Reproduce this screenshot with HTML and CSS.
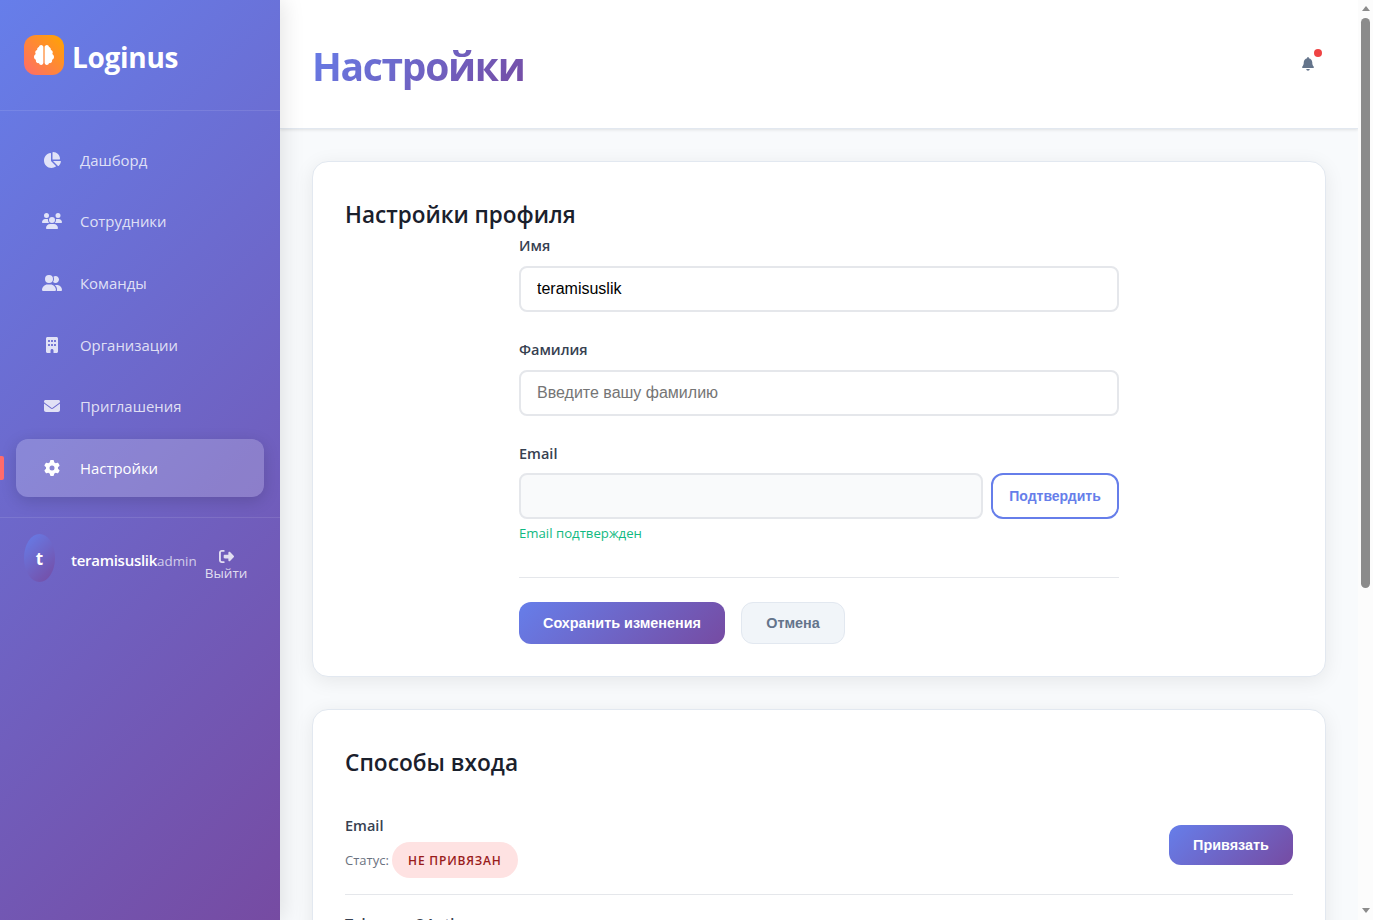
FILE: index.html
```html
<!DOCTYPE html>
<html lang="ru">
<head>
<meta charset="utf-8">
<title>Loginus — Настройки</title>
<link rel="stylesheet" href="styles.css">
</head>
<body>
<div class="app">
  <aside class="sidebar">
    <div class="brand">
      <span class="brand-mark"><svg width="20" height="20" viewBox="0 0 512 512"><path d="M184 0c30.9 0 56 25.1 56 56V456c0 30.9-25.1 56-56 56c-28.9 0-52.7-21.9-55.7-50.1c-5.2 1.4-10.7 2.1-16.3 2.1c-35.3 0-64-28.7-64-64c0-7.4 1.3-14.6 3.6-21.2C21.4 367.4 0 338.2 0 304c0-31.9 18.7-59.5 45.8-72.3C37.1 220.8 32 207 32 192c0-30.7 21.6-56.3 50.4-62.6C80.8 123.9 80 118 80 112c0-29.9 20.6-55.1 48.3-62.1C131.3 21.9 155.1 0 184 0zM328 0c28.9 0 52.6 21.9 55.7 49.9c27.8 7 48.3 32.1 48.3 62.1c0 6-.8 11.9-2.4 17.4c28.8 6.2 50.4 31.9 50.4 62.6c0 15-5.1 28.8-13.8 39.7C493.3 244.5 512 272.1 512 304c0 34.2-21.4 63.4-51.6 74.8c2.3 6.6 3.6 13.8 3.6 21.2c0 35.3-28.7 64-64 64c-5.6 0-11.1-.7-16.3-2.1c-3 28.2-26.8 50.1-55.7 50.1c-30.9 0-56-25.1-56-56V56c0-30.9 25.1-56 56-56z"/></svg></span>
      <span class="brand-name">Loginus</span>
    </div>
    <nav class="nav">
      <a class="nav-item"><svg width="18" height="16" viewBox="0 0 576 512"><path d="M304 240V16.6c0-9 7-16.6 16-16.6C443.7 0 544 100.3 544 224c0 9-7.6 16-16.6 16H304zM32 272C32 150.7 122.1 50.3 239 34.3c9.2-1.3 17 6.1 17 15.4V288L412.5 444.5c6.7 6.7 6.2 17.7-1.5 23.1C371.8 495.6 323.8 512 272 512C139.5 512 32 404.6 32 272zm526.4 16c9.3 0 16.6 7.8 15.4 17c-7.7 55.9-34.6 105.6-73.9 142.3c-6 5.6-15.4 5.2-21.2-.7L320 288H558.4z"/></svg><span>Дашборд</span></a>
      <a class="nav-item"><svg width="20" height="16" viewBox="0 0 640 512"><path d="M144 0a80 80 0 1 1 0 160A80 80 0 1 1 144 0zM512 0a80 80 0 1 1 0 160A80 80 0 1 1 512 0zM0 298.7C0 239.8 47.8 192 106.7 192h42.7c15.9 0 31 3.5 44.6 9.7c-1.3 7.2-1.9 14.7-1.9 22.3c0 38.2 16.8 72.5 43.3 96c-.2 0-.4 0-.7 0H21.3C9.6 320 0 310.4 0 298.7zM405.3 320c-.2 0-.4 0-.7 0c26.6-23.5 43.3-57.8 43.3-96c0-7.6-.7-15-1.9-22.3c13.6-6.3 28.7-9.7 44.6-9.7h42.7C592.2 192 640 239.8 640 298.7c0 11.8-9.6 21.3-21.3 21.3H405.3zM224 224a96 96 0 1 1 192 0 96 96 0 1 1 -192 0zM128 485.3C128 411.7 187.7 352 261.3 352H378.7C452.3 352 512 411.7 512 485.3c0 14.7-11.9 26.7-26.7 26.7H154.7c-14.7 0-26.7-11.9-26.7-26.7z"/></svg><span>Сотрудники</span></a>
      <a class="nav-item"><svg width="20" height="16" viewBox="0 0 640 512"><path d="M96 128a128 128 0 1 1 256 0A128 128 0 1 1 96 128zM0 482.3C0 383.8 79.8 304 178.3 304h91.4C368.2 304 448 383.8 448 482.3c0 16.4-13.3 29.7-29.7 29.7H29.7C13.3 512 0 498.7 0 482.3zM609.3 512H471.4c5.4-9.4 8.6-20.3 8.6-32v-8c0-60.7-27.1-115.2-69.8-151.8c2.4-.1 4.7-.2 7.1-.2h61.4C567.8 320 640 392.2 640 481.3c0 17-13.8 30.7-30.7 30.7zM432 256c-31 0-59-12.6-79.3-32.9C372.4 196.5 384 163.6 384 128c0-26.8-6.6-52.1-18.3-74.3C384.3 40.1 407.2 32 432 32c61.9 0 112 50.1 112 112s-50.1 112-112 112z"/></svg><span>Команды</span></a>
      <a class="nav-item"><svg width="12" height="16" viewBox="0 0 384 512"><path fill-rule="evenodd" d="M48 0C21.5 0 0 21.5 0 48V464c0 26.5 21.5 48 48 48h96V432c0-26.5 21.5-48 48-48s48 21.5 48 48v80h96c26.5 0 48-21.5 48-48V48c0-26.5-21.5-48-48-48H48zM64 240c0-8.800 7.200-16 16-16h32c8.800 0 16 7.200 16 16v32c0 8.800-7.200 16-16 16H80c-8.800 0-16-7.200-16-16V240zM160 240c0-8.800 7.200-16 16-16h32c8.800 0 16 7.200 16 16v32c0 8.800-7.200 16-16 16H176c-8.800 0-16-7.200-16-16V240zM256 240c0-8.800 7.200-16 16-16h32c8.800 0 16 7.200 16 16v32c0 8.800-7.200 16-16 16H272c-8.800 0-16-7.200-16-16V240zM64 112c0-8.800 7.200-16 16-16h32c8.800 0 16 7.200 16 16v32c0 8.800-7.200 16-16 16H80c-8.800 0-16-7.200-16-16V112zM160 112c0-8.800 7.200-16 16-16h32c8.800 0 16 7.200 16 16v32c0 8.800-7.200 16-16 16H176c-8.800 0-16-7.200-16-16V112zM256 112c0-8.800 7.200-16 16-16h32c8.800 0 16 7.200 16 16v32c0 8.800-7.200 16-16 16H272c-8.800 0-16-7.200-16-16V112z"/></svg><span>Организации</span></a>
      <a class="nav-item"><svg width="16" height="16" viewBox="0 0 512 512"><path d="M48 64C21.5 64 0 85.5 0 112c0 15.1 7.1 29.3 19.2 38.4L236.8 313.6c11.4 8.5 27 8.5 38.4 0L492.8 150.4c12.1-9.1 19.2-23.3 19.2-38.4c0-26.5-21.5-48-48-48H48zM0 176V384c0 35.3 28.7 64 64 64H448c35.3 0 64-28.7 64-64V176L294.4 339.2c-22.8 17.1-54 17.1-76.8 0L0 176z"/></svg><span>Приглашения</span></a>
      <a class="nav-item active"><svg width="16" height="16" viewBox="0 0 512 512"><path d="M495.9 166.6c3.2 8.7 .5 18.4-6.4 24.6l-43.3 39.4c1.1 8.3 1.7 16.8 1.7 25.4s-.6 17.1-1.7 25.4l43.3 39.4c6.9 6.2 9.6 15.9 6.4 24.6c-4.4 11.9-9.7 23.3-15.8 34.3l-4.7 8.1c-6.6 11-14 21.4-22.1 31.2c-5.9 7.2-15.7 9.6-24.5 6.8l-55.7-17.7c-13.4 10.3-28.2 18.9-44 25.4l-12.5 57.1c-2 9.1-9 16.3-18.2 17.8c-13.8 2.3-28 3.5-42.500 3.500s-28.7-1.2-42.5-3.5c-9.2-1.500-16.2-8.7-18.2-17.8l-12.5-57.1c-15.8-6.5-30.6-15.1-44-25.4L83.1 425.9c-8.8 2.8-18.6 .3-24.5-6.8c-8.1-9.8-15.5-20.2-22.1-31.2l-4.7-8.1c-6.1-11-11.4-22.4-15.8-34.3c-3.2-8.7-.5-18.4 6.4-24.6l43.3-39.4C64.6 273.1 64 264.6 64 256s.6-17.1 1.7-25.4L22.4 191.2c-6.9-6.2-9.6-15.9-6.4-24.6c4.4-11.9 9.7-23.3 15.8-34.3l4.7-8.1c6.6-11 14-21.4 22.1-31.2c5.9-7.2 15.7-9.6 24.5-6.8l55.7 17.7c13.4-10.3 28.2-18.9 44-25.4l12.5-57.1c2-9.1 9-16.3 18.2-17.8C227.3 1.2 241.5 0 256 0s28.7 1.2 42.5 3.5c9.2 1.5 16.2 8.7 18.2 17.8l12.5 57.1c15.8 6.5 30.6 15.1 44 25.4l55.7-17.7c8.8-2.8 18.6-.3 24.5 6.8c8.1 9.8 15.5 20.2 22.1 31.2l4.7 8.1c6.1 11 11.4 22.4 15.8 34.3zM256 336a80 80 0 1 0 0-160 80 80 0 1 0 0 160z"/></svg><span>Настройки</span></a>
    </nav>
    <div class="user">
      <span class="avatar">t</span>
      <span class="user-name">teramisuslik</span><span class="user-role">admin</span>
      <button class="logout"><svg width="15" height="15" viewBox="0 0 512 512"><path d="M377.9 105.9L500.7 228.7c7.2 7.2 11.3 17.1 11.3 27.3s-4.1 20.1-11.3 27.3L377.9 406.1c-6.4 6.4-15 9.9-24 9.9c-18.7 0-33.9-15.2-33.9-33.9l0-62.1-128 0c-17.7 0-32-14.3-32-32l0-64c0-17.7 14.3-32 32-32l128 0 0-62.1c0-18.7 15.2-33.9 33.9-33.9c9 0 17.6 3.6 24 9.9zM160 96L96 96c-17.7 0-32 14.3-32 32l0 256c0 17.7 14.3 32 32 32l64 0c17.7 0 32 14.3 32 32s-14.3 32-32 32l-64 0c-53 0-96-43-96-96L0 128C0 75 43 32 96 32l64 0c17.7 0 32 14.3 32 32s-14.3 32-32 32z"/></svg><span>Выйти</span></button>
    </div>
  </aside>

  <main class="main">
    <header class="topbar">
      <h1 class="page-title">Настройки</h1>
      <div class="bell"><svg width="12" height="13.700" viewBox="0 0 448 512"><path d="M224 0c-17.7 0-32 14.3-32 32V51.2C119 66 64 130.6 64 208v18.8c0 47-17.3 92.4-48.5 127.6l-7.4 8.3c-8.4 9.4-10.4 22.9-5.3 34.4S19.4 416 32 416H416c12.6 0 24-7.4 29.2-18.9s3.1-25-5.3-34.4l-7.4-8.3C401.3 319.2 384 273.9 384 226.8V208c0-77.4-55-142-128-156.8V32c0-17.7-14.3-32-32-32zm45.3 493.3c12-12 18.7-28.3 18.7-45.3H224 160c0 17 6.7 33.3 18.7 45.3s28.3 18.7 45.3 18.7s33.3-6.7 45.3-18.7z"/></svg><i class="bell-dot"></i></div>
    </header>
    <div class="content">
      <section class="card">
        <h2 class="card-title profile-title">Настройки профиля</h2>
        <form class="form">
          <label class="label">Имя</label>
          <input class="input" type="text" value="teramisuslik">
          <label class="label">Фамилия</label>
          <input class="input" type="text" placeholder="Введите вашу фамилию">
          <label class="label label-email">Email</label>
          <div class="email-row">
            <input class="input" type="text" disabled>
            <button class="btn btn-outline" type="button">Подтвердить</button>
          </div>
          <div class="hint">Email подтвержден</div>
          <div class="actions">
            <button class="btn btn-primary" type="button">Сохранить изменения</button>
            <button class="btn btn-secondary" type="button">Отмена</button>
          </div>
        </form>
      </section>
      <section class="card">
        <h2 class="card-title login-title">Способы входа</h2>
        <div class="method">
          <div>
            <div class="method-name">Email</div>
            <div class="method-status"><span class="status-label">Статус:</span><span class="badge">НЕ ПРИВЯЗАН</span></div>
          </div>
          <button class="btn btn-primary btn-link" type="button">Привязать</button>
        </div>
        <div class="method method-next">
          <div class="method-name">Telegram OAuth</div>
        </div>
      </section>
    </div>
  </main>
  <div class="scrollbar"><i class="arrow-up"></i><i class="thumb"></i><i class="arrow-down"></i></div>
</div>
</body>
</html>
```
FILE: styles.css
```css
* { box-sizing: border-box; }
body { margin: 0; font-family: "Open Sans", "Noto Sans", sans-serif; color: #1a202c; }
svg { fill: currentColor; display: block; }
.app { display: flex; width: 1373px; height: 920px; overflow: hidden; background: #f8fafc; }

.sidebar { position: relative; z-index: 2; width: 280px; flex: none; height: 920px; color: #fff; background: linear-gradient(135deg, #667eea 0%, #764ba2 100%); box-shadow: 4px 0 20px rgba(0, 0, 0, .1); }
.brand { display: flex; align-items: center; gap: 8px; height: 111px; padding: 0 24px; border-bottom: 1px solid rgba(255, 255, 255, .1); }
.brand-mark { display: grid; place-items: center; width: 40px; height: 40px; border-radius: 12px; background: linear-gradient(45deg, #ff6b6b, #ffa500); }
.brand-name { padding-top: 3px; font-size: 28px; font-weight: 700; letter-spacing: -.3px; line-height: 40px; }
.nav { display: flex; flex-direction: column; gap: 4px; height: 407px; padding: 20px 16px 0; border-bottom: 1px solid rgba(255, 255, 255, .1); }
.nav-item { position: relative; display: grid; grid-template-columns: 20px auto; justify-content: start; align-items: center; gap: 18px; height: 57.6px; padding: 0 26px; border-radius: 12px; color: rgba(255, 255, 255, .8); font-size: 14.900px; font-weight: 500; line-height: 24px; }
.nav-item svg { justify-self: center; }
.nav-item.active { color: #fff; background: rgba(255, 255, 255, .2); box-shadow: 0 4px 16px rgba(0, 0, 0, .15); }
.nav-item.active::before { content: ""; position: absolute; left: -16px; top: 17px; width: 4px; height: 24px; border-radius: 0 2px 2px 0; background: #ff6b6b; }
.user { display: flex; align-items: center; height: 80px; padding: 0 24px; }
.avatar { display: grid; place-items: center; width: 31px; height: 48px; margin-right: 16px; flex: none; border-radius: 50%; background: linear-gradient(135deg, #667eea, #764ba2); font-size: 17px; font-weight: 700; }
.user-name { font-size: 15px; font-weight: 600; letter-spacing: -.27px; padding-top: 4px; }
.user-role { font-size: 13.400px; color: rgba(255, 255, 255, .7); padding-top: 6px; }
.logout { display: flex; flex-direction: column; align-items: center; padding: 0; margin: 15px 0 0 8px; border: 0; background: none; color: rgba(255, 255, 255, .8); font-family: "Open Sans", sans-serif; font-size: 13.500px; line-height: 18px; }

.main { display: flex; flex-direction: column; width: 1078px; flex: none; }
.topbar { position: relative; display: flex; justify-content: space-between; height: 129px; flex: none; padding: 35px 44px 0 32px; background: #fff; border-bottom: 1px solid #e2e8f0; box-shadow: 0 1px 3px rgba(0, 0, 0, .1); }
.page-title { align-self: flex-start; margin: 0; font-size: 39px; letter-spacing: -1.300px; line-height: 61px; font-weight: 700; background: linear-gradient(135deg, #667eea, #764ba2); -webkit-background-clip: text; background-clip: text; color: transparent; }
.bell { position: relative; width: 12px; height: 14px; margin-top: 22px; color: #64748b; }
.bell-dot { position: absolute; left: 12px; top: -8px; width: 8px; height: 8px; border-radius: 50%; background: #ef4444; }
.content { display: flex; flex-direction: column; gap: 32px; padding: 32px; }
.card { height: 516px; flex: none; padding: 34px 32px; background: #fff; border: 1px solid #e2e8f0; border-radius: 16px; box-shadow: 0 4px 20px rgba(0, 0, 0, .08); }
.card-title { margin: 0; font-size: 22.500px; font-weight: 600; line-height: 38px; color: #1a202c; }
.login-title { font-size: 22.700px; }
.form { width: 600px; margin: 0 auto; }
.label { display: block; height: 32px; font-size: 14.500px; font-weight: 600; line-height: 24px; color: #374151; }
.input { display: block; width: 100%; height: 46px; margin: 0 0 26px; padding: 0 16px; border: 2px solid #e5e7eb; border-radius: 8px; background: #fff; color: #000; font: 16px "Liberation Sans", Arial, sans-serif; }
.input::placeholder { color: #757575; }
.label-email { height: 31px; }
.email-row { display: flex; gap: 8px; }
.email-row .input { flex: 1; margin: 0; background: #f9fafb; }
.hint { margin-top: 4px; font-size: 13.200px; line-height: 21px; color: #10b981; }
.btn { border: 0; border-radius: 12px; font: 700 14.400px "Liberation Sans", Arial, sans-serif; padding: 0; }
.btn-outline { width: 128px; height: 46px; border: 2px solid #667eea; background: #fff; color: #667eea; font-size: 14px; }
.btn-primary { width: 206px; height: 42px; color: #fff; background: linear-gradient(135deg, #667eea, #764ba2); }
.btn-secondary { width: 104px; height: 42px; border: 1px solid #e2e8f0; background: #f1f5f9; color: #64748b; }
.actions { display: flex; gap: 16px; margin-top: 33px; padding-top: 24px; border-top: 1px solid #e5e7eb; }
.method { display: flex; justify-content: space-between; align-items: center; height: 98px; margin-top: 15px; border-bottom: 1px solid #e5e7eb; }
.method-name { padding-top: 1px; font-size: 14.500px; font-weight: 600; line-height: 24px; color: #374151; }
.method-status { display: flex; align-items: center; gap: 3px; margin-top: 4px; font-size: 13px; color: #6b7280; }
.badge { display: grid; place-items: center; width: 126px; height: 36px; border-radius: 18px; background: #fee2e2; color: #991b1b; font-size: 12px; font-weight: 600; letter-spacing: .8px; }
.btn-link { width: 124px; height: 40px; margin-bottom: 2px; }
.method-next { align-items: flex-start; margin-top: 16px; }

.scrollbar { position: relative; display: flex; flex-direction: column; align-items: center; width: 15px; height: 920px; background: #fcfcfc; }
.arrow-up { margin-top: 6px; border: 4.500px solid transparent; border-top: 0; border-bottom: 5px solid #8b8b8b; }
.thumb { width: 9px; height: 570px; margin-top: 7px; border-radius: 5px; background: #8b8b8b; }
.arrow-down { margin-top: auto; margin-bottom: 7px; border: 4.500px solid transparent; border-bottom: 0; border-top: 5px solid #8b8b8b; }
```
